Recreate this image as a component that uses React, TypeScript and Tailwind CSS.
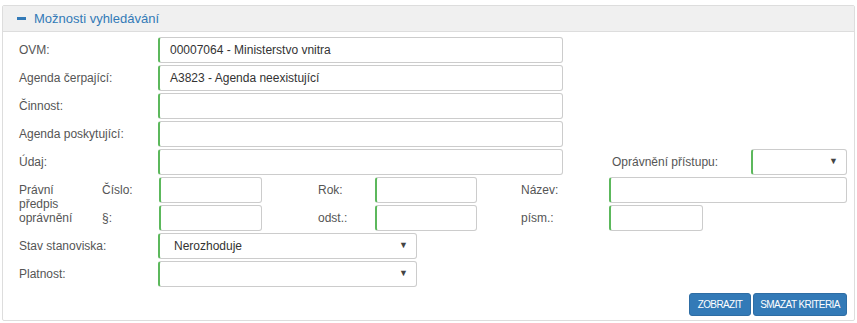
import React from "react";

const field =
  "h-[26px] border border-[#cccccc] border-l-2 border-l-[#5cb85c] rounded-[3px] bg-white px-[10px] text-[12px] text-[#333] flex items-center";

function Box({ w, value }: { w: string; value?: string }) {
  return <div className={`${field} ${w}`}>{value}</div>;
}

function Select({ w, value }: { w: string; value?: string }) {
  return (
    <div className={`${field} ${w} justify-between pl-[14px] pr-[8px]`}>
      <span>{value}</span>
      <span className="text-[9px] text-[#444]">▼</span>
    </div>
  );
}

function Row({ label, children }: { label: string; children: React.ReactNode }) {
  return (
    <div className="flex items-center h-[26px]">
      <div className="w-[139px] shrink-0">{label}</div>
      {children}
    </div>
  );
}

export default function App() {
  return (
    <div
      className="pt-[5px] pl-[2px] bg-white text-[12px] text-[#555]"
      style={{ fontFamily: '"Liberation Sans", Arial, sans-serif' }}
    >
      <div className="w-[853px] border border-[#dddddd] rounded-[2px]">
        <div className="h-[26px] bg-[#f0f0f0] border-b border-[#dddddd] flex items-center pl-[14px] text-[13px] text-[#337ab7]">
          <span className="inline-block w-[9px] h-[3px] bg-[#337ab7] mr-[8px]" />
          Možnosti vyhledávání
        </div>
        <div className="pt-[5px] pl-[16px] pr-[6px] pb-[4px] flex flex-col gap-[2px]">
          <Row label="OVM:">
            <Box w="w-[405px]" value="00007064 - Ministerstvo vnitra" />
          </Row>
          <Row label="Agenda čerpající:">
            <Box w="w-[405px]" value="A3823 - Agenda neexistující" />
          </Row>
          <Row label="Činnost:">
            <Box w="w-[405px]" />
          </Row>
          <Row label="Agenda poskytující:">
            <Box w="w-[405px]" />
          </Row>
          <Row label="Údaj:">
            <Box w="w-[405px]" />
            <div className="w-[188px] pl-[49px] shrink-0">Oprávnění přístupu:</div>
            <Select w="w-[96px]" />
          </Row>

          <div className="flex items-center">
            <div className="w-[83px] shrink-0 leading-[14px]">
              Právní
              <br />
              předpis
              <br />
              oprávnění
            </div>
            <div className="flex flex-col gap-[2px]">
              <div className="flex items-center h-[26px]">
                <div className="w-[57px] shrink-0">Číslo:</div>
                <Box w="w-[103px]" />
                <div className="w-[56px] shrink-0" />
                <div className="w-[57px] shrink-0">Rok:</div>
                <Box w="w-[102px]" />
                <div className="w-[44px] shrink-0" />
                <div className="w-[88px] shrink-0">Název:</div>
                <Box w="w-[238px]" />
              </div>
              <div className="flex items-center h-[26px]">
                <div className="w-[57px] shrink-0">§:</div>
                <Box w="w-[103px]" />
                <div className="w-[56px] shrink-0" />
                <div className="w-[57px] shrink-0">odst.:</div>
                <Box w="w-[102px]" />
                <div className="w-[44px] shrink-0" />
                <div className="w-[88px] shrink-0">písm.:</div>
                <Box w="w-[94px]" />
              </div>
            </div>
          </div>

          <Row label="Stav stanoviska:">
            <Select w="w-[259px]" value="Nerozhoduje" />
          </Row>
          <Row label="Platnost:">
            <Select w="w-[259px]" />
          </Row>

          <div className="flex justify-end gap-[2px] mt-[4px] pr-[1px]">
            <button className="h-[23px] w-[62px] bg-[#337ab7] border border-[#2e6da4] rounded-[3px] text-white text-[10px] tracking-[-0.6px]">
              ZOBRAZIT
            </button>
            <button className="h-[23px] w-[94px] bg-[#337ab7] border border-[#2e6da4] rounded-[3px] text-white text-[10px] tracking-[-0.6px]">
              SMAZAT KRITERIA
            </button>
          </div>
        </div>
      </div>
    </div>
  );
}
